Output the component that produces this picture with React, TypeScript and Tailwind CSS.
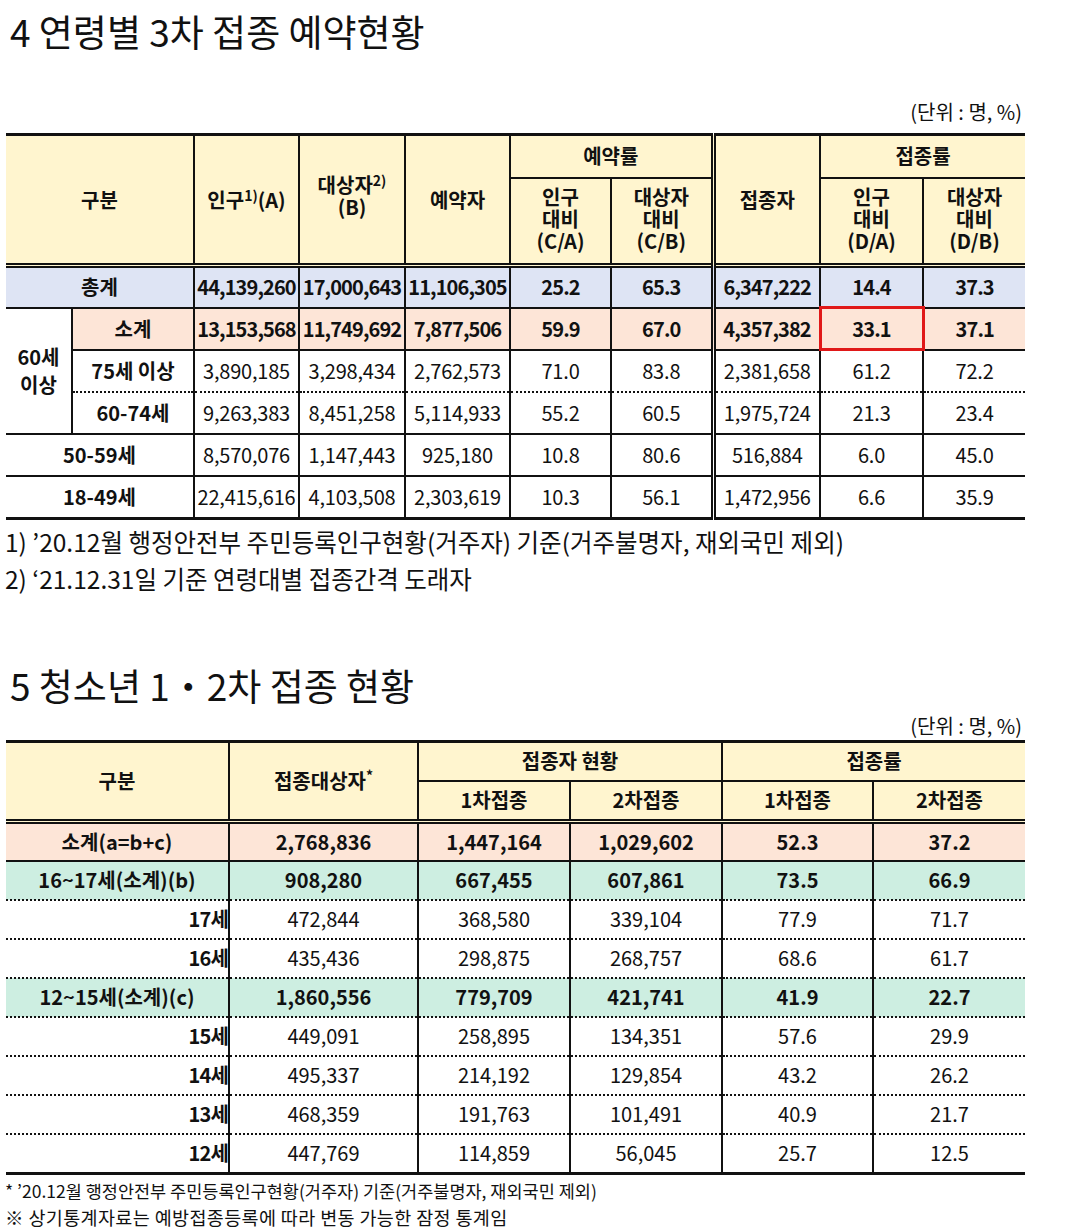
const LINE = 'border-[#111]';
const HEAD_BG = 'bg-[#fff5cf]';

type Row1 = {
  label: string;
  vals: string[];
  bg: string;
  bold?: boolean;
  kind: 'total' | 'sub' | 'dot' | 'solid' | 'last';
};

const rows1: Row1[] = [
  { label: '총계', vals: ['44,139,260', '17,000,643', '11,106,305', '25.2', '65.3', '6,347,222', '14.4', '37.3'], bg: 'bg-[#dee4f4]', bold: true, kind: 'total' },
  { label: '소계', vals: ['13,153,568', '11,749,692', '7,877,506', '59.9', '67.0', '4,357,382', '33.1', '37.1'], bg: 'bg-[#fde5d7]', bold: true, kind: 'sub' },
  { label: '75세 이상', vals: ['3,890,185', '3,298,434', '2,762,573', '71.0', '83.8', '2,381,658', '61.2', '72.2'], bg: 'bg-white', kind: 'dot' },
  { label: '60-74세', vals: ['9,263,383', '8,451,258', '5,114,933', '55.2', '60.5', '1,975,724', '21.3', '23.4'], bg: 'bg-white', kind: 'solid' },
  { label: '50-59세', vals: ['8,570,076', '1,147,443', '925,180', '10.8', '80.6', '516,884', '6.0', '45.0'], bg: 'bg-white', kind: 'solid' },
  { label: '18-49세', vals: ['22,415,616', '4,103,508', '2,303,619', '10.3', '56.1', '1,472,956', '6.6', '35.9'], bg: 'bg-white', kind: 'last' },
];

function bottomOf(kind: Row1['kind']) {
  if (kind === 'dot') return '[border-bottom:2px_dotted_#111]';
  if (kind === 'last') return 'border-b-[3px]';
  return 'border-b-2';
}

function Table1() {
  const th = `${HEAD_BG} ${LINE} font-bold p-0 align-middle text-center`;
  return (
    <table className="w-[1019px] table-fixed border-collapse text-[20px] leading-[24px] text-center">
      <colgroup>
        <col className="w-[66px]" />
        <col className="w-[122px]" />
        <col className="w-[105px]" />
        <col className="w-[106px]" />
        <col className="w-[105px]" />
        <col className="w-[101px]" />
        <col className="w-[102px]" />
        <col className="w-[107px]" />
        <col className="w-[103px]" />
        <col className="w-[102px]" />
      </colgroup>
      <thead>
        <tr className="h-[43px]">
          <th colSpan={2} rowSpan={2} className={`${th} border-t-[3px] border-r-2`}>구분</th>
          <th rowSpan={2} className={`${th} border-t-[3px] border-r-2`}>
            인구<sup className="text-[14px] -top-[7px]">1)</sup>(A)
          </th>
          <th rowSpan={2} className={`${th} border-t-[3px] border-r-2 leading-[22px] pb-[8px]`}>
            대상자<sup className="text-[14px] -top-[7px]">2)</sup>
            <br />
            (B)
          </th>
          <th rowSpan={2} className={`${th} border-t-[3px] border-r-2`}>예약자</th>
          <th colSpan={2} className={`${th} border-t-[3px] border-r-2 border-b-2`}>예약률</th>
          <th rowSpan={2} className={`${th} border-t-[3px] border-r-2 [border-left:5px_double_#111]`}>접종자</th>
          <th colSpan={2} className={`${th} border-t-[3px] border-b-2`}>접종률</th>
        </tr>
        <tr className="h-[88px]">
          <th className={`${th} border-r-2 leading-[22px] pb-[3px]`}>인구<br />대비<br />(C/A)</th>
          <th className={`${th} border-r-2 leading-[22px] pb-[3px]`}>대상자<br />대비<br />(C/B)</th>
          <th className={`${th} border-r-2 leading-[22px] pb-[3px]`}>인구<br />대비<br />(D/A)</th>
          <th className={`${th} leading-[22px] pb-[3px]`}>대상자<br />대비<br />(D/B)</th>
        </tr>
      </thead>
      <tbody>
        {rows1.map((r) => {
          const top = r.kind === 'total' ? '[border-top:5px_double_#111]' : '';
          const bottom = bottomOf(r.kind);
          const weight = r.bold ? 'font-bold tracking-[-0.045em]' : 'font-normal tracking-[-0.01em]';
          return (
            <tr key={r.label} className={r.kind === 'last' ? 'h-[43px]' : 'h-[42px]'}>
              {r.kind === 'sub' && (
                <td rowSpan={3} className={`bg-white ${LINE} border-r-2 border-b-2 font-bold leading-[28px] p-0`}>
                  60세
                  <br />
                  이상
                </td>
              )}
              <td
                colSpan={r.kind === 'sub' || r.kind === 'dot' || r.label === '60-74세' ? 1 : 2}
                className={`${r.bg} ${LINE} ${top} ${bottom} border-r-2 font-bold p-0 whitespace-nowrap`}
              >
                {r.label}
              </td>
              {r.vals.map((v, i) => {
                const isRed = r.kind === 'sub' && i === 6;
                const left = i === 5 ? '[border-left:5px_double_#111]' : '';
                const right = i === 7 ? '' : 'border-r-2';
                const cls = isRed
                  ? `${r.bg} [border:3px_solid_#e01818]`
                  : `${r.bg} ${LINE} ${top} ${bottom} ${left} ${right}`;
                return (
                  <td key={i} className={`${cls} ${weight} p-0 whitespace-nowrap`}>
                    {v}
                  </td>
                );
              })}
            </tr>
          );
        })}
      </tbody>
    </table>
  );
}

type Row2 = {
  label: string;
  vals: string[];
  bg: string;
  bold?: boolean;
  align: 'center' | 'right';
};

const rows2: Row2[] = [
  { label: '소계(a=b+c)', vals: ['2,768,836', '1,447,164', '1,029,602', '52.3', '37.2'], bg: 'bg-[#fde5d7]', bold: true, align: 'center' },
  { label: '16~17세(소계)(b)', vals: ['908,280', '667,455', '607,861', '73.5', '66.9'], bg: 'bg-[#cdeee1]', bold: true, align: 'center' },
  { label: '17세', vals: ['472,844', '368,580', '339,104', '77.9', '71.7'], bg: 'bg-white', align: 'right' },
  { label: '16세', vals: ['435,436', '298,875', '268,757', '68.6', '61.7'], bg: 'bg-white', align: 'right' },
  { label: '12~15세(소계)(c)', vals: ['1,860,556', '779,709', '421,741', '41.9', '22.7'], bg: 'bg-[#cdeee1]', bold: true, align: 'center' },
  { label: '15세', vals: ['449,091', '258,895', '134,351', '57.6', '29.9'], bg: 'bg-white', align: 'right' },
  { label: '14세', vals: ['495,337', '214,192', '129,854', '43.2', '26.2'], bg: 'bg-white', align: 'right' },
  { label: '13세', vals: ['468,359', '191,763', '101,491', '40.9', '21.7'], bg: 'bg-white', align: 'right' },
  { label: '12세', vals: ['447,769', '114,859', '56,045', '25.7', '12.5'], bg: 'bg-white', align: 'right' },
];

function Table2() {
  const th = `${HEAD_BG} ${LINE} font-bold p-0 align-middle text-center`;
  return (
    <table className="w-[1019px] table-fixed border-collapse text-[20px] leading-[24px] text-center">
      <colgroup>
        <col className="w-[223px]" />
        <col className="w-[189px]" />
        <col className="w-[152px]" />
        <col className="w-[152px]" />
        <col className="w-[151px]" />
        <col className="w-[152px]" />
      </colgroup>
      <thead>
        <tr className="h-[39px]">
          <th rowSpan={2} className={`${th} border-t-[3px] border-r-2`}>구분</th>
          <th rowSpan={2} className={`${th} border-t-[3px] border-r-2`}>
            접종대상자<sup className="text-[14px] -top-[8px]">*</sup>
          </th>
          <th colSpan={2} className={`${th} border-t-[3px] border-r-2 border-b-2`}>접종자 현황</th>
          <th colSpan={2} className={`${th} border-t-[3px] border-b-2`}>접종률</th>
        </tr>
        <tr className="h-[41px]">
          <th className={`${th} border-r-2`}>1차접종</th>
          <th className={`${th} border-r-2`}>2차접종</th>
          <th className={`${th} border-r-2`}>1차접종</th>
          <th className={th}>2차접종</th>
        </tr>
      </thead>
      <tbody>
        {rows2.map((r, idx) => {
          const last = idx === rows2.length - 1;
          const top = idx === 0 ? '[border-top:5px_double_#111]' : '';
          const bottom = idx === 0 ? 'border-b-2' : last ? 'border-b-[3px]' : '[border-bottom:2px_dotted_#111]';
          const weight = r.bold ? 'font-bold' : 'font-normal';
          const h = last ? 'h-[40px]' : 'h-[39px]';
          return (
            <tr key={r.label} className={h}>
              <td
                className={`${r.bg} ${LINE} ${top} ${bottom} border-r-2 font-bold p-0 whitespace-nowrap ${
                  r.align === 'right' ? 'text-right tracking-[-0.04em]' : 'text-center'
                }`}
              >
                {r.label}
              </td>
              {r.vals.map((v, i) => (
                <td
                  key={i}
                  className={`${r.bg} ${LINE} ${top} ${bottom} ${i === 4 ? '' : 'border-r-2'} ${weight} p-0 whitespace-nowrap`}
                >
                  {v}
                </td>
              ))}
            </tr>
          );
        })}
      </tbody>
    </table>
  );
}

export default function App() {
  return (
    <div className="w-[1080px] h-[1230px] overflow-hidden bg-white text-[#111] font-['Noto_Sans_CJK_KR','Noto_Sans',sans-serif]">
      <div className="ml-[6px] w-[1019px]">
        <h1 className="pt-[7px] pl-[4px] text-[37px] leading-[48px] font-normal">
          4 연령별 3차 접종 예약현황
        </h1>
        <div className="mt-[45px] pr-[3px] text-right text-[20px] leading-[24px]">(단위 : 명, %)</div>
        <div className="mt-[9px]">
          <Table1 />
        </div>

        <div className="mt-[3px] text-[24.5px] leading-[37px]">
          <p className="-ml-[1px]">1) ’20.12월 행정안전부 주민등록인구현황(거주자) 기준(거주불명자, 재외국민 제외)</p>
          <p className="-ml-[1px]">2) ‘21.12.31일 기준 연령대별 접종간격 도래자</p>
        </div>

        <h2 className="mt-[64px] pl-[4px] text-[37px] leading-[48px] font-normal">
          5 청소년 1・2차 접종 현황
        </h2>
        <div className="mt-[5px] pr-[3px] text-right text-[20px] leading-[24px]">(단위 : 명, %)</div>
        <div className="mt-[2px]">
          <Table2 />
        </div>

        <div className="mt-[6px]">
          <p className="-ml-[1px] text-[17.5px] leading-[20px]">* ’20.12월 행정안전부 주민등록인구현황(거주자) 기준(거주불명자, 재외국민 제외)</p>
          <p className="mt-[5px] -ml-[1px] text-[18.5px] leading-[22px] tracking-[0.02em]">※ 상기통계자료는 예방접종등록에 따라 변동 가능한 잠정 통계임</p>
        </div>
      </div>
    </div>
  );
}
